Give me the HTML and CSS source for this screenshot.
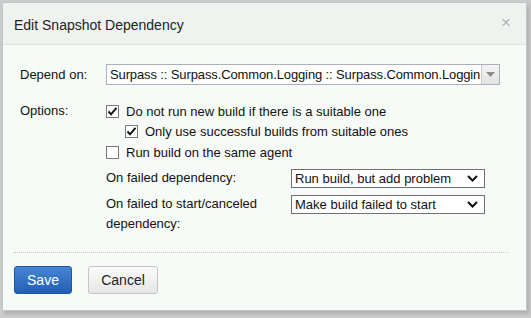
FILE: index.html
```html
<!DOCTYPE html>
<html lang="en">
<head>
    <meta charset="UTF-8">
    <title>Edit Snapshot Dependency</title>
    <link rel="stylesheet" href="styles.css">
</head>
<body>

    <div class="dialog">
        <div class="dialog-header">
            <span class="dialog-title">Edit Snapshot Dependency</span>
            <span class="close">&times;</span>
        </div>

        <div class="dialog-body">
            <div class="row">
                <div class="label">Depend on:</div>
                <div class="combo">
                    <span class="combo-text">Surpass :: Surpass.Common.Logging :: Surpass.Common.Loggin</span>
                    <span class="combo-btn">
                        <svg width="9" height="5" viewBox="0 0 9 5"><path d="M0 0h9L4.5 5z" fill="#8c8c8c"/></svg>
                    </span>
                </div>
            </div>

            <div class="row options">
                <div class="label">Options:</div>
                <div class="option-list">
                    <div class="check">
                        <span class="box"><svg width="11" height="11" viewBox="0 0 11 11"><path d="M1.5 5.5l2.5 2.8L9.5 1.8" fill="none" stroke="#111" stroke-width="2"/></svg></span>
                        Do not run new build if there is a suitable one
                    </div>
                    <div class="check sub">
                        <span class="box"><svg width="11" height="11" viewBox="0 0 11 11"><path d="M1.5 5.5l2.5 2.8L9.5 1.8" fill="none" stroke="#111" stroke-width="2"/></svg></span>
                        Only use successful builds from suitable ones
                    </div>
                    <div class="check">
                        <span class="box"></span>
                        Run build on the same agent
                    </div>

                    <div class="setting">
                        <div class="setting-label">On failed dependency:</div>
                        <div class="dropdown">
                            <span>Run build, but add problem</span>
                            <svg width="11" height="7" viewBox="0 0 11 7"><path d="M1 1l4.5 4.5L10 1" fill="none" stroke="#111" stroke-width="2"/></svg>
                        </div>
                    </div>
                    <div class="setting">
                        <div class="setting-label">On failed to start/canceled dependency:</div>
                        <div class="dropdown">
                            <span>Make build failed to start</span>
                            <svg width="11" height="7" viewBox="0 0 11 7"><path d="M1 1l4.5 4.5L10 1" fill="none" stroke="#111" stroke-width="2"/></svg>
                        </div>
                    </div>
                </div>
            </div>
        </div>

        <div class="dialog-footer">
            <button class="btn btn-primary">Save</button>
            <button class="btn">Cancel</button>
        </div>
    </div>

</body>
</html>
```

FILE: styles.css
```css
/* Page behind the modal */
body, html {
    margin: 0;
    padding: 0;
    height: 100%;
    background: #cbcccb;
    font-family: 'Liberation Sans', Arial, sans-serif;
    color: #111;
    overflow: hidden;
}

/* Dialog */
.dialog {
    margin: 2px 0 0 2px;
    width: 523px;
    height: 307px;
    background: #f7fbf8;
    border: 1px solid #c3c6c3;
    box-shadow: 2px 3px 4px rgba(0, 0, 0, 0.15);
    display: flex;
    flex-direction: column;
}

.dialog-header {
    height: 41px;
    background: #eff3f0;
    border-bottom: 1px solid #dfe4e0;
    display: flex;
    align-items: center;
    justify-content: space-between;
    padding: 0 15px 0 11px;
}
.dialog-title {
    font-size: 14px;
    color: #222;
    padding-top: 2px;
}
.close {
    font-size: 17px;
    color: #b0b4b8;
    margin-top: -2px;
}

/* Form */
.dialog-body {
    padding: 19px 0 0 17px;
    font-size: 13px;
    flex: 1;
}
.row {
    display: flex;
    align-items: center;
}
.label {
    width: 86px;
    flex-shrink: 0;
}
.options {
    align-items: flex-start;
    margin-top: 16px;
}
.options .label {
    line-height: 20px;
}

.combo {
    width: 392px;
    height: 19px;
    border: 1px solid #a9b1bd;
    background: #fff;
    display: flex;
    align-items: center;
}
.combo-text {
    flex: 1;
    white-space: nowrap;
    padding-left: 3px;
    font-size: 13px;
    letter-spacing: -0.12px;
}
.combo-btn {
    width: 17px;
    height: 19px;
    border-left: 1px solid #c8ccd2;
    background: linear-gradient(#f4f4f4, #e2e2e2);
    display: flex;
    align-items: center;
    justify-content: center;
}

.option-list {
    display: flex;
    flex-direction: column;
}
.check {
    display: flex;
    align-items: center;
    height: 20.5px;
}
.check.sub {
    padding-left: 19px;
}
.box {
    width: 11px;
    height: 11px;
    border: 1px solid #7a7a7a;
    background: #fff;
    margin-right: 7px;
    display: flex;
    align-items: center;
    justify-content: center;
}

.setting {
    display: flex;
    align-items: flex-start;
    margin-top: 5px;
}
.setting + .setting {
    margin-top: 6px;
}
.setting-label {
    width: 185px;
    line-height: 20px;
}
.dropdown {
    width: 183px;
    height: 17px;
    margin-top: 1px;
    border: 1px solid #707070;
    background: #fff;
    display: flex;
    align-items: center;
    justify-content: space-between;
    padding: 0 6px 0 3px;
    font-size: 13px;
}

/* Footer */
.dialog-footer {
    margin: 0 18px 0 11px;
    padding: 13px 0 16px;
    border-top: 1px dotted #c6ccc7;
    display: flex;
    gap: 16px;
}
.btn {
    height: 28px;
    width: 70px;
    font-family: 'Liberation Sans', Arial, sans-serif;
    font-size: 14px;
    color: #222;
    border: 1px solid #c4c4c4;
    border-radius: 3px;
    background: linear-gradient(#fbfbfb, #e6e6e6);
    padding: 0;
}
.btn-primary {
    width: 58px;
    color: #fff;
    border-color: #1d56a6;
    background: linear-gradient(#4585d2, #2160b4);
}
```
